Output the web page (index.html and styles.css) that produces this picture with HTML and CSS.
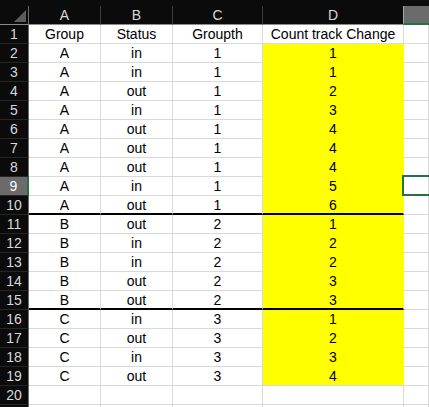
FILE: index.html
```html
<!DOCTYPE html>
<html>
<head>
<meta charset="utf-8">
<link rel="stylesheet" href="styles.css">
</head>
<body>
<div class="topstrip"></div>
<div class="sheet">
  <div class="ch corner"><div class="tri"></div></div>
  <div class="ch">A</div><div class="ch">B</div><div class="ch">C</div><div class="ch">D</div><div class="ch active-col"></div>

  <div class="rh">1</div><div class="c">Group</div><div class="c">Status</div><div class="c">Groupth</div><div class="c">Count track Change</div><div class="c"></div>
  <div class="rh">2</div><div class="c">A</div><div class="c">in</div><div class="c">1</div><div class="c y">1</div><div class="c"></div>
  <div class="rh">3</div><div class="c">A</div><div class="c">in</div><div class="c">1</div><div class="c y">1</div><div class="c"></div>
  <div class="rh">4</div><div class="c">A</div><div class="c">out</div><div class="c">1</div><div class="c y">2</div><div class="c"></div>
  <div class="rh">5</div><div class="c">A</div><div class="c">in</div><div class="c">1</div><div class="c y">3</div><div class="c"></div>
  <div class="rh">6</div><div class="c">A</div><div class="c">out</div><div class="c">1</div><div class="c y">4</div><div class="c"></div>
  <div class="rh">7</div><div class="c">A</div><div class="c">out</div><div class="c">1</div><div class="c y">4</div><div class="c"></div>
  <div class="rh">8</div><div class="c">A</div><div class="c">out</div><div class="c">1</div><div class="c y">4</div><div class="c"></div>
  <div class="rh active-row">9</div><div class="c">A</div><div class="c">in</div><div class="c">1</div><div class="c y">5</div><div class="c sel"></div>
  <div class="rh">10</div><div class="c tb">A</div><div class="c tb">out</div><div class="c tb">1</div><div class="c y tb">6</div><div class="c"></div>
  <div class="rh">11</div><div class="c">B</div><div class="c">out</div><div class="c">2</div><div class="c y">1</div><div class="c"></div>
  <div class="rh">12</div><div class="c">B</div><div class="c">in</div><div class="c">2</div><div class="c y">2</div><div class="c"></div>
  <div class="rh">13</div><div class="c">B</div><div class="c">in</div><div class="c">2</div><div class="c y">2</div><div class="c"></div>
  <div class="rh">14</div><div class="c">B</div><div class="c">out</div><div class="c">2</div><div class="c y">3</div><div class="c"></div>
  <div class="rh">15</div><div class="c tb">B</div><div class="c tb">out</div><div class="c tb">2</div><div class="c y tb">3</div><div class="c"></div>
  <div class="rh">16</div><div class="c">C</div><div class="c">in</div><div class="c">3</div><div class="c y">1</div><div class="c"></div>
  <div class="rh">17</div><div class="c">C</div><div class="c">out</div><div class="c">3</div><div class="c y">2</div><div class="c"></div>
  <div class="rh">18</div><div class="c">C</div><div class="c">in</div><div class="c">3</div><div class="c y">3</div><div class="c"></div>
  <div class="rh">19</div><div class="c">C</div><div class="c">out</div><div class="c">3</div><div class="c y last">4</div><div class="c"></div>
  <div class="rh">20</div><div class="c"></div><div class="c"></div><div class="c"></div><div class="c"></div><div class="c"></div>
  <div class="rh"></div><div class="c"></div><div class="c"></div><div class="c"></div><div class="c"></div><div class="c"></div>
</div>
</body>
</html>
```
FILE: styles.css
```css
html, body {
  margin: 0;
  padding: 0;
  background: #ffffff;
  overflow: hidden;
}
body {
  width: 429px;
  height: 407px;
  font-family: "Liberation Sans", Arial, sans-serif;
  font-size: 14px;
}
.topstrip {
  height: 6px;
  background: #0b0b0b;
}
.sheet {
  display: grid;
  grid-template-columns: 29px 72px 72px 90px 141px 1fr;
  grid-auto-rows: 19px;
}
.sheet > div {
  box-sizing: border-box;
  line-height: 18px;
  text-align: center;
  white-space: nowrap;
  overflow: hidden;
}
.c {
  color: #000;
  background: #fff;
  border-right: 1px solid #d9d9d9;
  border-bottom: 1px solid #d9d9d9;
}
.ch {
  background: #0b0b0b;
  color: #d8d8d8;
  border-right: 1px solid #3c3c3c;
  border-bottom: 1px solid #8c8c8c;
}
.corner {
  display: flex;
  justify-content: flex-end;
  align-items: flex-end;
  padding: 0 2px 2px 0;
  border-right-color: #6c6c6c;
}
.tri {
  width: 12px;
  height: 12px;
  background: #5c5c5c;
  clip-path: polygon(100% 0, 100% 100%, 0 100%);
}
.active-col {
  background: #6b6b6b;
  border-bottom: 2px solid #217346;
  border-right: none;
  border-left: 1px solid #a8a8a8;
  margin-left: -1px;
}
.rh {
  background: #0b0b0b;
  color: #d8d8d8;
  border-right: 1px solid #6c6c6c;
  border-bottom: 1px solid #262626;
}
.active-row {
  background: #6b6b6b;
  color: #ffffff;
  border-right: 2px solid #217346;
}
.y {
  background: #ffff00;
  border-right-color: #ffff00;
  border-bottom-color: #ffff00;
}
.y.last {
  border-bottom-color: #d9d9d9;
}
.tb {
  border-bottom: 2px solid #000;
}
.y.tb {
  border-bottom-color: #000;
}
.sel {
  position: relative;
  overflow: visible !important;
}
.sel::after {
  content: "";
  position: absolute;
  top: -2px;
  left: -2px;
  right: -4px;
  bottom: -1px;
  border: 2px solid #217346;
}
```
